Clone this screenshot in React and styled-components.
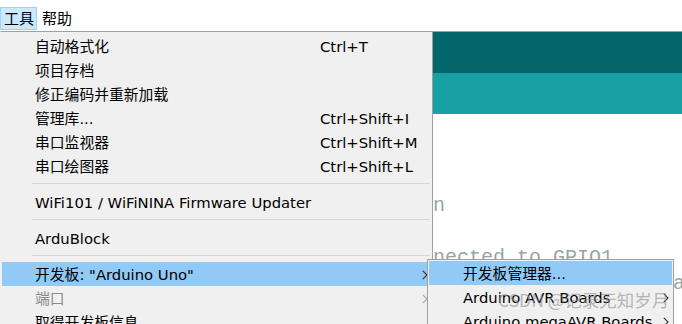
import React from "react";
import styled, { createGlobalStyle } from "styled-components";

const GlobalStyle = createGlobalStyle`
  html, body { margin: 0; padding: 0; background: #ffffff; overflow: hidden; }
  body { font-family: "DejaVu Sans", "Noto Sans CJK SC", sans-serif; }
`;

const UI_FONT = `"DejaVu Sans", "Noto Sans CJK SC", sans-serif`;

const Window = styled.div`
  position: relative;
  width: 682px;
  height: 324px;
  overflow: hidden;
  background: #ffffff;
`;

const MenuBar = styled.div`
  display: flex;
  align-items: flex-end;
  gap: 1px;
  height: 31px;
  border-bottom: 1px solid #a0a0a0;
  background: #ffffff;
  font-family: ${UI_FONT};
  font-size: 15px;
  color: #000;
`;

const MenuTitle = styled.div`
  box-sizing: border-box;
  height: 23px;
  margin-bottom: 1px;
  padding: 1px 2px 0 3px;
  line-height: 20px;
  border: 1px solid ${(p) => (p.$active ? "#99d1ff" : "transparent")};
  background: ${(p) => (p.$active ? "#cce8ff" : "transparent")};
`;

const Editor = styled.div`
  display: flex;
  flex-direction: column;
`;

const Toolbar = styled.div`
  height: 41px;
  background: #03666a;
`;

const TabStrip = styled.div`
  height: 41px;
  background: #17a1a5;
`;

const CodeArea = styled.pre`
  margin: 0;
  padding: 1px 0 0 13px;
  font-family: "Liberation Mono", "DejaVu Sans Mono", monospace;
  font-size: 20px;
  line-height: 26px;
  color: #95a5a6;
  white-space: pre;
`;

const Dropdown = styled.div`
  position: absolute;
  left: 0;
  top: 31px;
  width: 433px;
  box-sizing: border-box;
  border: 1px solid #a0a0a0;
  border-left-color: #f0f0f0;
  padding: 2px 1px;
  background: #f0f0f0;
  font-family: ${UI_FONT};
  font-size: 14.8px;
`;

const SubMenu = styled(Dropdown)`
  left: 427px;
  top: 259px;
  width: 247px;
  border-left-color: #a0a0a0;
  padding: 1px;
`;

const Item = styled.div`
  display: grid;
  grid-template-columns: ${(p) => p.$cols};
  align-items: center;
  box-sizing: border-box;
  height: 24px;
  padding: 1px 3px 0 ${(p) => p.$indent}px;
  background: ${(p) => (p.$hover ? "#91c9f7" : "transparent")};
  color: ${(p) => (p.$disabled ? "#8a8a8a" : "#000")};
  white-space: nowrap;
  line-height: 23px;
`;

const Separator = styled.div`
  height: 12px;
  display: flex;
  align-items: flex-start;
  padding: 0 1px 0 30px;
  &::after {
    content: "";
    margin-top: 5px;
    flex: 1;
    height: 1px;
    background: #d7d7d7;
  }
`;

const ArrowWrap = styled.span`
  display: flex;
  align-items: center;
  justify-content: flex-end;
  color: ${(p) => (p.$disabled ? "#a6a6a6" : "#333")};
`;

const Watermark = styled.div`
  position: absolute;
  left: 498px;
  top: 287px;
  font-family: "Noto Sans CJK SC", sans-serif;
  font-size: 17.5px;
  line-height: 26px;
  color: rgba(140, 140, 140, 0.6);
  white-space: nowrap;
  pointer-events: none;
`;

const Chevron = ({ disabled }) => (
  <ArrowWrap $disabled={disabled}>
    <svg width="6" height="10" viewBox="0 0 6 10">
      <polyline
        points="0.8,0.8 5,5 0.8,9.2"
        fill="none"
        stroke="currentColor"
        strokeWidth="1.1"
      />
    </svg>
  </ArrowWrap>
);

const MAIN_COLS = "285px 1fr 8px";
const SUB_COLS = "1fr 8px";

const MenuItem = ({ label, shortcut, arrow, hover, disabled }) => (
  <Item $cols={MAIN_COLS} $indent={33} $hover={hover} $disabled={disabled}>
    <span>{label}</span>
    <span>{shortcut || ""}</span>
    {arrow ? <Chevron disabled={disabled} /> : <span />}
  </Item>
);

const SubItem = ({ label, arrow, hover }) => (
  <Item $cols={SUB_COLS} $indent={34} $hover={hover}>
    <span>{label}</span>
    {arrow ? <Chevron /> : <span />}
  </Item>
);

const codeLines = [
  "void setup() {",
  "",
  "",
  " // initialize the digital pin as an",
  "  // output.",
  "// onboard LED of the ESP-01 is connected to GPIO1",
  "  pinMode(1, OUTPUT);".padEnd(55, " ") + "a",
];

export default function App() {
  return (
    <Window>
      <GlobalStyle />
      <MenuBar>
        <MenuTitle $active>工具</MenuTitle>
        <MenuTitle>帮助</MenuTitle>
      </MenuBar>
      <Editor>
        <Toolbar />
        <TabStrip />
        <CodeArea>{codeLines.join("\n")}</CodeArea>
      </Editor>

      <Dropdown>
        <MenuItem label="自动格式化" shortcut="Ctrl+T" />
        <MenuItem label="项目存档" />
        <MenuItem label="修正编码并重新加载" />
        <MenuItem label="管理库..." shortcut="Ctrl+Shift+I" />
        <MenuItem label="串口监视器" shortcut="Ctrl+Shift+M" />
        <MenuItem label="串口绘图器" shortcut="Ctrl+Shift+L" />
        <Separator />
        <MenuItem label="WiFi101 / WiFiNINA Firmware Updater" />
        <Separator />
        <MenuItem label="ArduBlock" />
        <Separator />
        <MenuItem label={'开发板: "Arduino Uno"'} arrow hover />
        <MenuItem label="端口" arrow disabled />
        <MenuItem label="取得开发板信息" />
      </Dropdown>

      <SubMenu>
        <SubItem label="开发板管理器..." hover />
        <SubItem label="Arduino AVR Boards" arrow />
        <SubItem label="Arduino megaAVR Boards" arrow />
      </SubMenu>

      <Watermark>CSDN @记录无知岁月</Watermark>
    </Window>
  );
}
